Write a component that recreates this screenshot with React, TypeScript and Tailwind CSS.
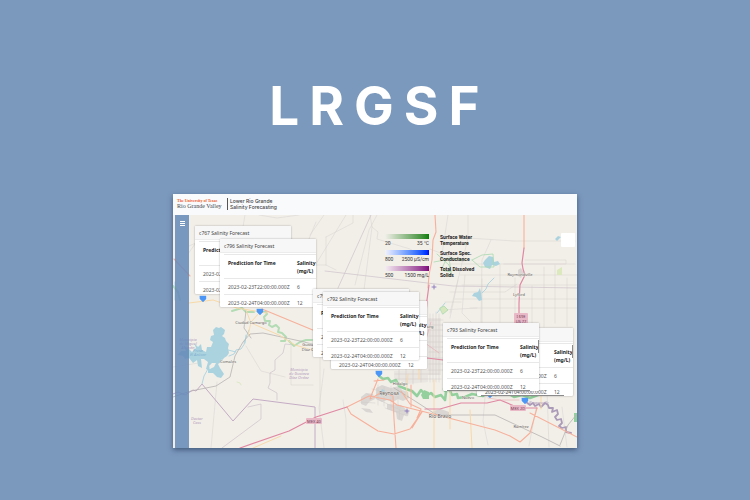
type ForecastRow = { time: string; salinity: number };

const rows: ForecastRow[] = [
  { time: "2023-02-23T22:00:00.000Z", salinity: 6 },
  { time: "2023-02-24T04:00:00.000Z", salinity: 12 },
];

const stations = [
  { id: "c767", place: "left-[22px] top-[11px]", bars: false },
  { id: "c796", place: "left-[47px] top-[24px]", bars: false },
  { id: "c791", place: "left-[140px] top-[74px]", bars: false },
  { id: "c794", place: "left-[158px] top-[86px]", bars: false },
  { id: "c792", place: "left-[150px] top-[77px]", bars: false },
  { id: "c795", place: "left-[304px] top-[113px]", bars: true },
  { id: "c793", place: "left-[270px] top-[108px]", bars: true },
];

const legend = [
  { low: "20", high: "35 °C", bar: "from-[#f1efe9] to-[#008000]", label: ["Surface Water", "Temperature"] },
  { low: "800", high: "2500 µS/cm", bar: "from-[#f4f2fa] to-[#0000ff]", label: ["Surface Spec.", "Conductance"] },
  { low: "500", high: "1500 mg/L", bar: "from-[#f4eef2] to-[#800080]", label: ["Total Dissolved", "Solids"] },
];

const markers = [
  [203, 298],
  [260, 311],
  [379, 373],
  [490, 394],
  [525, 400],
];

function StationCard({ id, place, bars }: { id: string; place: string; bars: boolean }) {
  return (
    <section
      className={`absolute ${place} h-[68px] w-24 overflow-hidden rounded-[1px] bg-white font-['Noto_Sans',sans-serif] text-[5px] leading-[8px] text-[#555] shadow-[0_0_2px_rgba(0,0,0,0.35)]`}
    >
      <h2 className="h-[14px] border-b border-[#ececec] bg-[#f7f7f7] px-1 py-[3px] whitespace-nowrap text-[#444]">
        {id} Salinity Forecast
      </h2>
      <div className="pt-px pl-1">
        <table className="w-[104px] table-fixed border-collapse">
          <thead>
            <tr className="h-6 border-y border-[#e8e8e8] text-left align-top text-[#222]">
              <th className="w-[69px] pt-1 pl-1 font-bold whitespace-nowrap">Prediction for Time</th>
              <th className="pt-1 pl-1 font-bold">
                Salinity
                <br />
                (mg/L)
              </th>
            </tr>
          </thead>
          <tbody>
            {rows.map((row) => (
              <tr key={row.time} className="h-4 border-b border-[#e8e8e8]">
                <td className="pl-1 whitespace-nowrap">{row.time}</td>
                <td className="pl-1">{row.salinity}</td>
              </tr>
            ))}
          </tbody>
        </table>
      </div>
      {bars && (
        <>
          <span className="absolute bottom-0 left-1 h-px w-[83px] bg-[#8b8b8b]" />
          <span className="absolute top-[17px] right-0 h-[13px] w-px bg-[#8b8b8b]" />
        </>
      )}
    </section>
  );
}

function Terrain() {
  return (
    <svg
      viewBox="173 215 404 233"
      preserveAspectRatio="xMinYMin slice"
      className="absolute inset-0 h-full w-full font-['Noto_Sans',sans-serif]"
      fill="none"
      strokeLinejoin="round"
      strokeLinecap="round"
      role="img"
      aria-label="Map of the Lower Rio Grande Valley"
    >
      <rect x="173" y="215" width="404" height="233" fill="#f2efe9" />

      {/* urban areas */}
      <g fill="#d9d6d4">
        <path d="M376 388l6-3 9 3 8-2 3 4 6 2 1 6-6 3-5-2-5 3-6-2-5 2-6-3z" />
        <path d="M361 397l5-4 7 1 2 5-6 3-3 4-5-2zM361 408l9 1 3 4-7-1z" />
        <path d="M387 404l14 1 8 7-1 4-4-1-2 6-5-2-1-7-9-3z" />
        <path d="M433 411l8-2 8 3 0 5-12 0zM518 270l3-2 3 5-3 5-3-2z" />
      </g>
      <path d="M428 318h13v57h-13zM394 371l34-1v12l-20 2-14-6z" fill="#e6e1dc" opacity=".7" />

      {/* street grid and county roads */}
      <g stroke="#dad5d1" strokeWidth=".6">
        <path d="M188 254L206 228M245 215l-2 12M189 246l18-8M259 215l18 3 22-3M316 222l-7 17M310 235l14-20M310 265h16l10 5M326 237v28M326 237l27-14v-8M370 215l2 12 6 5-1 7 33 10 18 11M316 264L346 215" />
        <path d="M372 227l-8 63M468 215v23l-18 75M468 238l46 3h61M450 264h125M460 275h117M462 285h115M455 299h122M470 308h107M500 265v57M515 278v45M532 286v38M544 267v60M555 265v58M567 278v48M482 279v43M491 240l-9 20-1 62M504 264h62v-4h-41M450 292h55l12-8M458 280l-8 38M465 275l-3 38 9 9M445 302h16M441 310l36-2" />
        <path d="M173 367l26-4M217 382l-6 66M246 346l15 25 24 6M320 358v55M324 369l-5 39 5 40M346 448v-29l-3-19M485 397l-2 24 5 24M547 390l2 57M562 407l5 40M537 403l-8 43" />
        <path d="M291 346v39h22M377 215l-8 15-14 55M430 249l34 13M448 215l-7 46" />
      </g>
      <g stroke="#d0cbc8" strokeWidth=".5">
        <path d="M429 320h14M429 325h14M428 330h15M429 336h14M428 342h15M429 347h14M429 352h14M428 358h15M429 364h14M428 370h15M430 314v68M433 314v68M436 312v70M439 314v68M395 374h44M395 379h46M399 370v15M406 369v16M413 370v14M421 370v12" />
        <path d="M372 389l25 6M367 394l33 16M360 402l15 1M378 385v20M384 387v19M391 386v22M398 388v20M385 408l22 8M393 412l15-2M400 407l-1 13" />
      </g>
      <g stroke="#cdc2ca" strokeWidth=".7">
        <path d="M371 215L338 288M325 271l128 15 124 2" />
        <path d="M294 345l-9-1-2 9-8 7v10l-5 3v10l-2 5 9 5 0 7" />
        <path d="M248 407l13-3v15l-39 29" />
      </g>
      <path d="M173 394l5-2 7 3 8-5 3 1 6-7 31 37 20-22 62 8v41" stroke="#c4acc4" strokeWidth="1" />

      {/* reservoir */}
      <g fill="#aad3df">
        <path d="M213 330L216 327L219 328L221 327L225 330L224 334L222 336L225 338L226 341L229 344L228 348L229 353L227 356L224 358L221 362L218 364L220 368L224 374L221 378L217 377L213 373L208 373L208 370L214 367L216 363L212 363L209 366L210 371L206 369L208 362L204 359L201 359L202 368L198 366L197 360L193 363L189 358L185 359L183 356L177 355L181 351L186 351L184 346L189 349L192 352L196 348L194 343L198 347L201 344L202 350L206 352L207 347L211 347L213 342L210 340L211 336L214 335Z" />
        <path d="M485 260l4-4 4 1 1 5 4-1 2 3-4 2-4-1-2 4-5-2-2-4zM474 293l4-1 2-4 1 5 1 7-3 1-3-4-4-1zM555 239l3-3 3 1-4 4z" />
        <path d="M563 357h3v5h-3zM382 389l3 2-3 5-2-2z" />
      </g>
      <g stroke="#aad3df" strokeWidth=".9">
        <path d="M202 384l2-8 5-9M229 356l5-2 2-4 5-1 4-6 1-8M228 350l8 2M482 293l4-4 2-5 6-6M249 330l-5 13M445 303l-8 10M175 282v18" />
      </g>

      {/* parks and river greenbelt */}
      <g stroke="#b3dcb5" strokeWidth="2">
        <path d="M173 286l5 6 2 8M232 311l10-3 4 4 8 0M261 312l5 0 1 2-3 3 1 4 5 0-1 4 3 2 4-2 3 3-1 4 4 1 4 4-1 4-4 0M289 341l5 5 6-4 6-2 6 0" />
      </g>
      <g stroke="#aad9ae" strokeWidth=".8">
        <path d="M437 254l12 11 3 10M447 258l-6 12 10 2-2-14 16 2M472 260l10-5 11-1 1 13-14 0-8-7M434 262l16-3" />
        <path d="M440 308l4-2 4 4-5 4z" fill="#d6e6bd" />
        <path d="M237 382l3 1 1 2" stroke="#d6e6bd" />
      </g>
      <path d="M557 270l5-3v8h-5z" fill="#dce9be" />
      <path
        d="M379 376l4 3 5-1 3 4 5-2 3 6 7 3 6 2 5 5 4-6 5 6 5-3 4 4 6-2 4 5 1-8-2-3 5 0 3 6 5-1 1 4 7-1 7-3 11 2 4-3 9 2 5-3 8 2 5 3 8-2 8 3 8-3"
        stroke="#94d09d"
        strokeWidth="2.6"
      />
      <path d="M421 395l3-5 5 2 0 7-6 0z" fill="#94d09d" />
      <path
        d="M526 402l4 3 3-2 2 3 4-2 2 3 4-4 3 2 1 3 4 0-1 4 5-2 1 4-3 3 2 3 4-1 1 4-3 3 3 2 4-1 0 5 5 1"
        stroke="#ab9ab8"
        strokeWidth="1.8"
      />
      <path d="M574 413h3v9h-3z" fill="#94d09d" />

      {/* railways */}
      <g stroke="#b6b3b1" strokeWidth=".8">
        <path d="M173 397l18-6 25-5 14-9 5-21 8-14 7-8 13-1 37 8 20 5M246 311l-2 17 7 10" />
        <path d="M394 388l21 13 17 11 9 5M441 415h54l17 8 30 14 18 9M560 445l8-20 9-11" />
      </g>

      {/* highways */}
      <g stroke="#f8d9a8" strokeWidth="1">
        <path d="M189 303l24-3 24 8 30 5M246 310l5 13 28 12 16 10 24 7M253 448l28-12M260 312l-9 10-3 14M408 374l-2 24M434 380v68M450 386v43M541 391v18M419 367v12M470 410l2 38" />
      </g>
      <g stroke="#f7b09a" strokeWidth="1.1">
        <path d="M435 215l1 17-3 8-1 20-3 15-1 13" />
        <path d="M524 215v33M262 309l58 24M190 276l-16-17" />
        <path d="M378 379l-7 17-1 3 12-7 11 4M347 407l22-11 21 4 7 5 24 6 20 5 54 14 15 6 10 6 10-9 7-25M347 407l4 7 27 17 16 3 16-5 7-10 5-8M393 397l1 22 2 29M401 391l9 13 11 5-4 9M374 381l10-1M530 413l47 24M411 385v22M422 412l-10 16" />
      </g>
      <g stroke="#e088a2" strokeWidth="1.2">
        <path d="M429 285l-2 15-1 15M524 248l-2 15 1 6 2 6-5 10-1 18v17M240 448l49-17 27-14 31-10M427 358l16 2M425 409h15l21-6 26 0 13-3 19 8h18" />
      </g>
      <g stroke="#e8a7b2" strokeWidth=".6">
        <path d="M431 322l-6 21 14 10M488 398l13 2 18 0" />
      </g>
      <g stroke="#8975bd" strokeWidth=".9">
        <path d="M432 287h4M434 285v4M405 411h4M407 409v4" />
      </g>

      {/* road shields */}
      <g fontSize="4" fill="#743c57" textAnchor="middle">
        <rect x="514" y="313" width="14" height="11" rx="1" fill="#e9b9c7" />
        <text x="521" y="318">I 69E</text>
        <text x="521" y="323">US 77</text>
        <rect x="306" y="418" width="16" height="6" rx="1" fill="#e9b9c7" />
        <text x="314" y="423">MEX 40</text>
        <rect x="510" y="405" width="16" height="6" rx="1" fill="#e9b9c7" />
        <text x="518" y="410">MEX 2D</text>
      </g>

      {/* places */}
      <g fill="#5a5754" stroke="#f7f4ef" strokeWidth=".5" paintOrder="stroke" fontSize="4" textAnchor="middle">
        <text x="251" y="324">Ciudad Camargo</text>
        <text x="228" y="363">Comales</text>
        <text x="310" y="346">Gustavo</text>
        <text x="312" y="351">Díaz Ordaz</text>
        <text x="520" y="276">Raymondville</text>
        <text x="519" y="296">Lyford</text>
        <text x="521" y="428">Ramírez</text>
        <text x="400" y="385">Hidalgo</text>
        <text x="468" y="399">Nuevo</text>
        <text x="425" y="328">Edinburg</text>
        <text x="389" y="395" fontSize="5">Reynosa</text>
        <text x="440" y="418" fontSize="5">Río Bravo</text>
      </g>
      <g fill="#b39cbd" fontSize="4" fontStyle="italic" textAnchor="middle">
        <text x="188" y="341">Municipio</text>
        <text x="188" y="345">de Miguel</text>
        <text x="188" y="349">Alemán</text>
        <text x="299" y="371">Municipio</text>
        <text x="299" y="375">de Gustavo</text>
        <text x="299" y="379">Díaz Ordaz</text>
        <text x="197" y="420">Doctor</text>
        <text x="197" y="424">Coss</text>
        <text x="539" y="404">Brownsville</text>
      </g>
      <g fill="#83b0d0" fontSize="4" fontStyle="italic" textAnchor="middle">
        <text x="198" y="352">Presa</text>
        <text x="198" y="356">El Azúcar</text>
      </g>

      {/* station pins */}
      <g fill="#4c97f5">
        {markers.map(([x, y]) => (
          <path key={x} d={`M${x - 3} ${y - 2}h6v3l-3 3-3-3z`} stroke="#4c97f5" strokeWidth=".4" />
        ))}
      </g>
    </svg>
  );
}

export default function App() {
  return (
    <main className="flex min-h-screen flex-col items-center bg-[#7b98bd] pt-[74px]">
      <h1 className="pl-[9px] font-['Inter',sans-serif] text-[53px] leading-[64px] font-bold tracking-[10px] text-white">
        LRGSF
      </h1>

      <div className="mt-14 w-full max-w-[404px] bg-[#f9fafb] shadow-[0_2px_5px_rgba(30,50,80,0.6)]">
        <header className="flex h-[21px] items-start px-1 pt-1">
          <div className="flex w-[50px] flex-col font-['Liberation_Serif',serif] whitespace-nowrap">
            <span className="text-[4px] leading-[5px] font-bold text-[#f05a28]">The University of Texas</span>
            <span className="text-[6px] leading-[6px] text-[#3f454b]">Rio Grande Valley</span>
          </div>
          <div className="border-l border-[#555] pl-[2px] font-['Inter',sans-serif] text-[5px] leading-[6px] font-medium text-[#3f4246]">
            Lower Rio Grande
            <br />
            Salinity Forecasting
          </div>
        </header>

        <div className="relative flex min-h-[233px] overflow-hidden">
          <Terrain />
          <aside className="relative ml-[2px] w-[14px] bg-[#6488b9]/85">
            <button type="button" aria-label="Open menu" className="mt-[6px] flex w-full flex-col items-center gap-px">
              <span className="h-px w-[5px] bg-white" />
              <span className="h-px w-[5px] bg-white" />
              <span className="h-px w-[5px] bg-white" />
            </button>
          </aside>

          <ul className="absolute top-[19px] left-[212px] flex flex-col gap-1 font-['Roboto',sans-serif] text-[5px] leading-[6px] text-[#333]">
            {legend.map((item) => (
              <li key={item.low} className="flex gap-[11px]">
                <div className="w-11">
                  <div className={`h-[5px] bg-linear-to-r ${item.bar}`} />
                  <div className="flex justify-between pt-px whitespace-nowrap">
                    <span>{item.low}</span>
                    <span>{item.high}</span>
                  </div>
                </div>
                <p className="font-bold whitespace-nowrap text-[#222]">
                  {item.label[0]}
                  <br />
                  {item.label[1]}
                </p>
              </li>
            ))}
          </ul>

          <button
            type="button"
            aria-label="Map layers"
            className="absolute top-[18px] right-[2px] size-[14px] rounded-[1px] bg-white"
          />

          {stations.map((station) => (
            <StationCard key={station.id} {...station} />
          ))}
        </div>
      </div>
    </main>
  );
}
